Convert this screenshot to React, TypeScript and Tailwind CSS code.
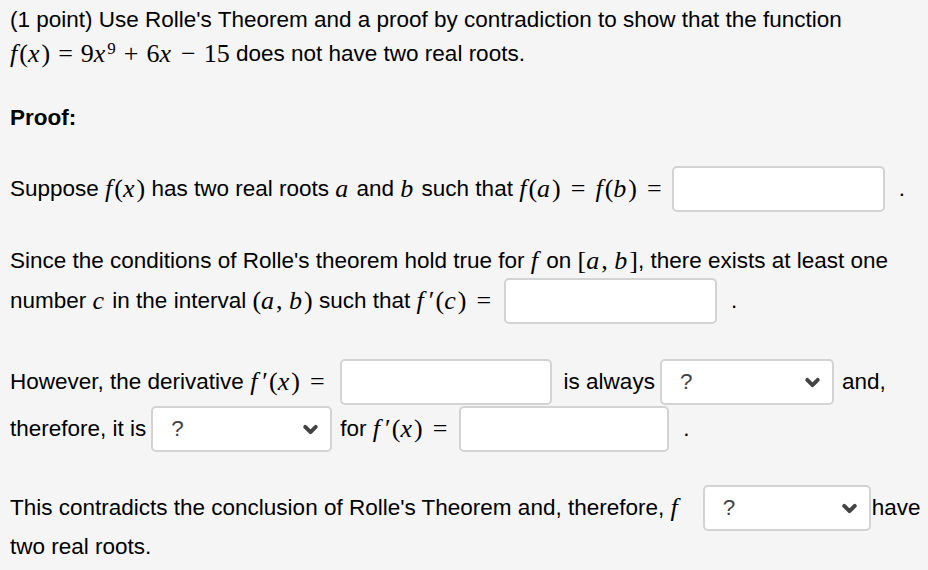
import { ChevronDown } from "lucide-react";
import type { ReactNode } from "react";

const Mt = ({ children }: { children: ReactNode }) => (
  <span className="font-['Liberation_Serif',serif] text-[26px] leading-none">{children}</span>
);
const I = ({ children }: { children: ReactNode }) => <i className="pr-[2px]">{children}</i>;
const Op = ({ children }: { children: ReactNode }) => <span className="px-[10px]">{children}</span>;
const Prime = () => <span className="pl-[3px] pr-[1px]">′</span>;

function Blank({ w }: { w: number }) {
  return (
    <div
      className="h-[46px] shrink-0 rounded-[5px] border-2 border-[#d3d3d3] bg-white"
      style={{ width: w }}
    />
  );
}

function Pick({ w }: { w: number }) {
  return (
    <div
      className="flex h-[46px] shrink-0 items-center justify-between rounded-[5px] border-2 border-[#d3d3d3] bg-white pl-[18px] pr-[9px] text-[#444]"
      style={{ width: w }}
    >
      <span>?</span>
      <ChevronDown size={21} strokeWidth={4.5} className="text-[#444]" />
    </div>
  );
}

export default function App() {
  return (
    <div className="min-h-[570px] bg-[#f5f5f5] pl-[10px] pt-[3px] font-['Liberation_Sans',Arial,sans-serif] text-[22.5px] text-black">
      <div className="flex h-[34px] items-center whitespace-pre">
        (1 point) Use Rolle's Theorem and a proof by contradiction to show that the function
      </div>
      <div className="flex h-[34px] items-center whitespace-pre">
        <Mt>
          <I>f</I>(<I>x</I>)<span className="px-[8px]">=</span>9<I>x</I>
          <sup className="text-[17px]">9</sup>
          <span className="px-[8px]">+</span>6<I>x</I>
          <span className="px-[8px]">−</span>15
        </Mt>
        <span> does not have two real roots.</span>
      </div>

      <div className="mt-[30px] flex h-[34px] items-center font-bold">Proof:</div>

      <div className="mt-[31px] flex items-center whitespace-pre">
        <span>Suppose </span>
        <Mt>
          <I>f</I>(<I>x</I>)
        </Mt>
        <span> has two real roots </span>
        <Mt>
          <I>a</I>
        </Mt>
        <span> and </span>
        <Mt>
          <I>b</I>
        </Mt>
        <span> such that </span>
        <Mt>
          <I>f</I>(<I>a</I>)<Op>=</Op>
          <I>f</I>(<I>b</I>)<Op>=</Op>
        </Mt>
        <Blank w={213} />
        <span className="ml-[14px]">.</span>
      </div>

      <div className="mt-[32px] flex h-[34px] items-center whitespace-pre">
        <span>Since the conditions of Rolle's theorem hold true for </span>
        <Mt>
          <I>f</I>
        </Mt>
        <span> on </span>
        <Mt>
          [<I>a</I>, <I>b</I>]
        </Mt>
        <span>, there exists at least one</span>
      </div>
      <div className="flex items-center whitespace-pre">
        <span>number </span>
        <Mt>
          <I>c</I>
        </Mt>
        <span> in the interval </span>
        <Mt>
          (<I>a</I>, <I>b</I>)
        </Mt>
        <span> such that </span>
        <Mt>
          <I>f</I>
          <Prime />(<I>c</I>)<Op>=</Op>
        </Mt>
        <div className="ml-[3px]">
          <Blank w={213} />
        </div>
        <span className="ml-[14px]">.</span>
      </div>

      <div className="mt-[35px] flex items-center whitespace-pre">
        <span>However, the derivative </span>
        <Mt>
          <I>f</I>
          <Prime />(<I>x</I>)<Op>=</Op>
        </Mt>
        <div className="ml-[5px]">
          <Blank w={212} />
        </div>
        <span className="ml-[12px] mr-[5px]">is always</span>
        <Pick w={174} />
        <span className="ml-[8px]">and,</span>
      </div>
      <div className="mt-[1px] flex items-center whitespace-pre">
        <span>therefore, it is</span>
        <div className="ml-[5px]">
          <Pick w={181} />
        </div>
        <span className="ml-[8px]">for </span>
        <Mt>
          <I>f</I>
          <Prime />(<I>x</I>)<Op>=</Op>
        </Mt>
        <div className="ml-[2px]">
          <Blank w={210} />
        </div>
        <span className="ml-[14px]">.</span>
      </div>

      <div className="mt-[33px] flex items-center whitespace-pre">
        <span>This contradicts the conclusion of Rolle's Theorem and, therefore, </span>
        <Mt>
          <I>f</I>
        </Mt>
        <div className="ml-[23px]">
          <Pick w={168} />
        </div>
        <span className="ml-[1px]">have</span>
      </div>
      <div className="mt-[1px] flex h-[30px] items-center">two real roots.</div>
    </div>
  );
}
